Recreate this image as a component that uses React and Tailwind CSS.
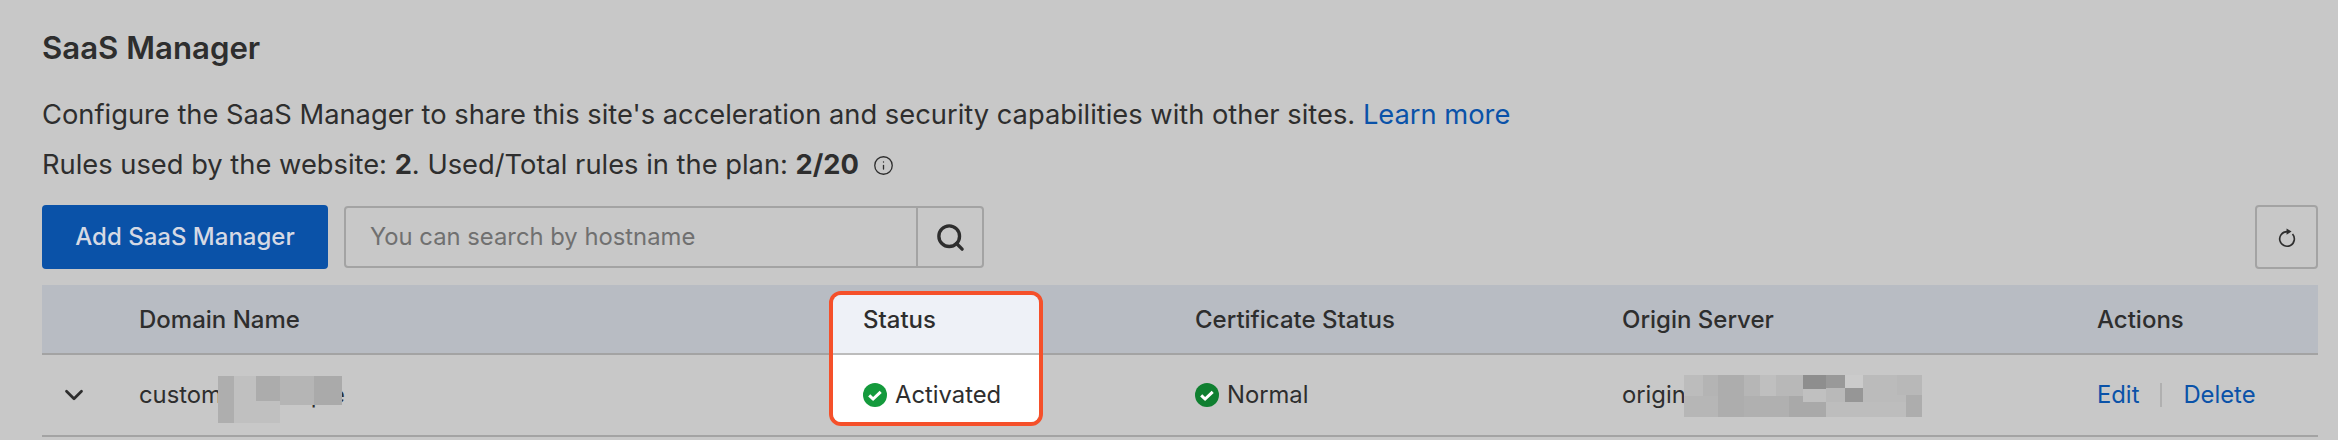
import React from 'react';
import { ChevronDown, Search, Info } from 'lucide-react';

const gridCols = 'grid grid-cols-[97px_724px_332px_427px_475px_221px]';

function CheckDot({ color }) {
  return (
    <svg width="24" height="24" viewBox="0 0 24 24" className="shrink-0">
      <circle cx="12" cy="12" r="12" fill={color} />
      <path d="M6.2 12.3l3.9 3.7 7.6-7.2" fill="none" stroke="#fff" strokeWidth="3" />
    </svg>
  );
}

function RefreshIcon() {
  return (
    <svg width="22" height="22" viewBox="0 0 24 24" fill="none" className="mt-[1px]">
      <path d="M12 5A8 8 0 1 0 18 7.7" stroke="#2e2e2e" strokeWidth="1.8" />
      <path d="M11.5 1.6l5.5 3.4-5.5 3.4z" fill="#2e2e2e" />
    </svg>
  );
}

export default function App() {
  return (
    <div className="w-[2338px] h-[440px] bg-[#c8c8c8] pl-[42px] pr-[20px] pt-[30px] text-[#2e2e2e] text-[27.3px] font-['Inter',sans-serif] overflow-hidden">
      <h1 className="text-[31.2px] font-semibold leading-[36px]">SaaS Manager</h1>

      <p className="mt-[31px] leading-[36px]">
        Configure the SaaS Manager to share this site's acceleration and security capabilities with other sites.{' '}
        <a className="text-[#0a52a8]">Learn more</a>
      </p>
      <p className="mt-[14px] leading-[36px] flex items-center">
        <span>Rules used by the website: <b>2</b>. Used/Total rules in the plan: <b>2/20</b></span>
        <Info size={21} strokeWidth={1.5} className="ml-[14px]" />
      </p>

      <div className="mt-[22px] flex items-center h-[64px]">
        <button className="w-[286px] h-[64px] rounded-[4px] bg-[#0a52a8] text-[#d5d9e4] font-medium text-[24px]">Add SaaS Manager</button>
        <div className="ml-[16px] w-[640px] h-[62px] flex border-2 border-[#a3a3a3] rounded-[4px]">
          <span className="flex-1 flex items-center pl-[24px] text-[#707070] text-[23.8px]">You can search by hostname</span>
          <span className="w-[66px] flex items-center justify-center border-l-2 border-[#a3a3a3]">
            <Search size={31} strokeWidth={2.6} />
          </span>
        </div>
        <button className="ml-auto w-[63px] h-[64px] flex items-center justify-center border-2 border-[#a3a3a3] rounded-[4px]">
          <RefreshIcon />
        </button>
      </div>

      <div className="relative mt-[16px] w-[2276px]">
        <div className={`${gridCols} h-[70px] pt-[2px] items-center bg-[#b8bcc3] border-b-2 border-[#a3a3a3] font-medium text-[24px]`}>
          <span />
          <span>Domain Name</span>
          <span className="relative z-10">Status</span>
          <span>Certificate Status</span>
          <span>Origin Server</span>
          <span>Actions</span>
        </div>
        <div className={`${gridCols} h-[82px] items-center border-b-2 border-[#a3a3a3] text-[23.8px]`}>
          <span className="flex justify-center pr-[33px]"><ChevronDown size={30} strokeWidth={2.2} /></span>
          <span>customer.example</span>
          <span className="relative z-10 flex items-center gap-[8px]"><CheckDot color="#149a3c" />Activated</span>
          <span className="flex items-center gap-[8px]"><CheckDot color="#0f7f30" />Normal</span>
          <span>origin.example.site.test</span>
          <span className="flex items-center text-[#0a52a8]">
            <a>Edit</a>
            <i className="mx-[21px] w-[2px] h-[24px] bg-[#b0b0b0]" />
            <a>Delete</a>
          </span>
        </div>

        {/* spotlight over the status column */}
        <div className="absolute left-[787px] top-[6px] w-[214px] h-[135px] border-4 border-[#f5502a] rounded-[12px] overflow-hidden flex flex-col">
          <div className="h-[58px] bg-[#eef1f7]" />
          <div className="h-[2px] bg-[#bcbcbc]" />
          <div className="flex-1 bg-white" />
        </div>

        {/* blurred domain */}
        <svg className="absolute left-[176px] top-[91px]" width="124" height="47" shapeRendering="crispEdges">
          <rect x="0" y="0" width="16" height="47" fill="#aeaeae" />
          <rect x="16" y="0" width="46" height="47" fill="#c0c0c0" />
          <rect x="38" y="0" width="24" height="25" fill="#acacac" />
          <rect x="62" y="0" width="34" height="29" fill="#b5b5b5" />
          <rect x="96" y="0" width="28" height="29" fill="#aaaaaa" />
        </svg>

        {/* blurred origin */}
        <svg className="absolute left-[1642px] top-[90px]" width="238" height="42" shapeRendering="crispEdges">
          <rect x="0" y="0" width="19" height="21" fill="#bcbcbc" />
          <rect x="19" y="0" width="15" height="21" fill="#b4b4b4" />
          <rect x="34" y="0" width="26" height="42" fill="#adadad" />
          <rect x="60" y="0" width="16" height="21" fill="#b6b6b6" />
          <rect x="76" y="0" width="16" height="21" fill="#bfbfbf" />
          <rect x="92" y="0" width="27" height="21" fill="#b8b8b8" />
          <rect x="0" y="21" width="34" height="21" fill="#b6b6b6" />
          <rect x="60" y="21" width="45" height="21" fill="#b0b0b0" />
          <rect x="105" y="21" width="37" height="21" fill="#a9a9a9" />
          <rect x="119" y="0" width="23" height="14" fill="#8e8e8e" />
          <rect x="119" y="14" width="23" height="13" fill="#c0c0c0" />
          <rect x="142" y="0" width="19" height="13" fill="#999999" />
          <rect x="142" y="13" width="19" height="14" fill="#b9b9b9" />
          <rect x="161" y="0" width="18" height="13" fill="#cbcbcb" />
          <rect x="161" y="13" width="18" height="14" fill="#969696" />
          <rect x="142" y="27" width="80" height="15" fill="#bdbdbd" />
          <rect x="179" y="0" width="43" height="27" fill="#bbbbbb" />
          <rect x="213" y="0" width="25" height="20" fill="#b8b8b8" />
          <rect x="222" y="20" width="16" height="22" fill="#adadad" />
        </svg>
      </div>
    </div>
  );
}
